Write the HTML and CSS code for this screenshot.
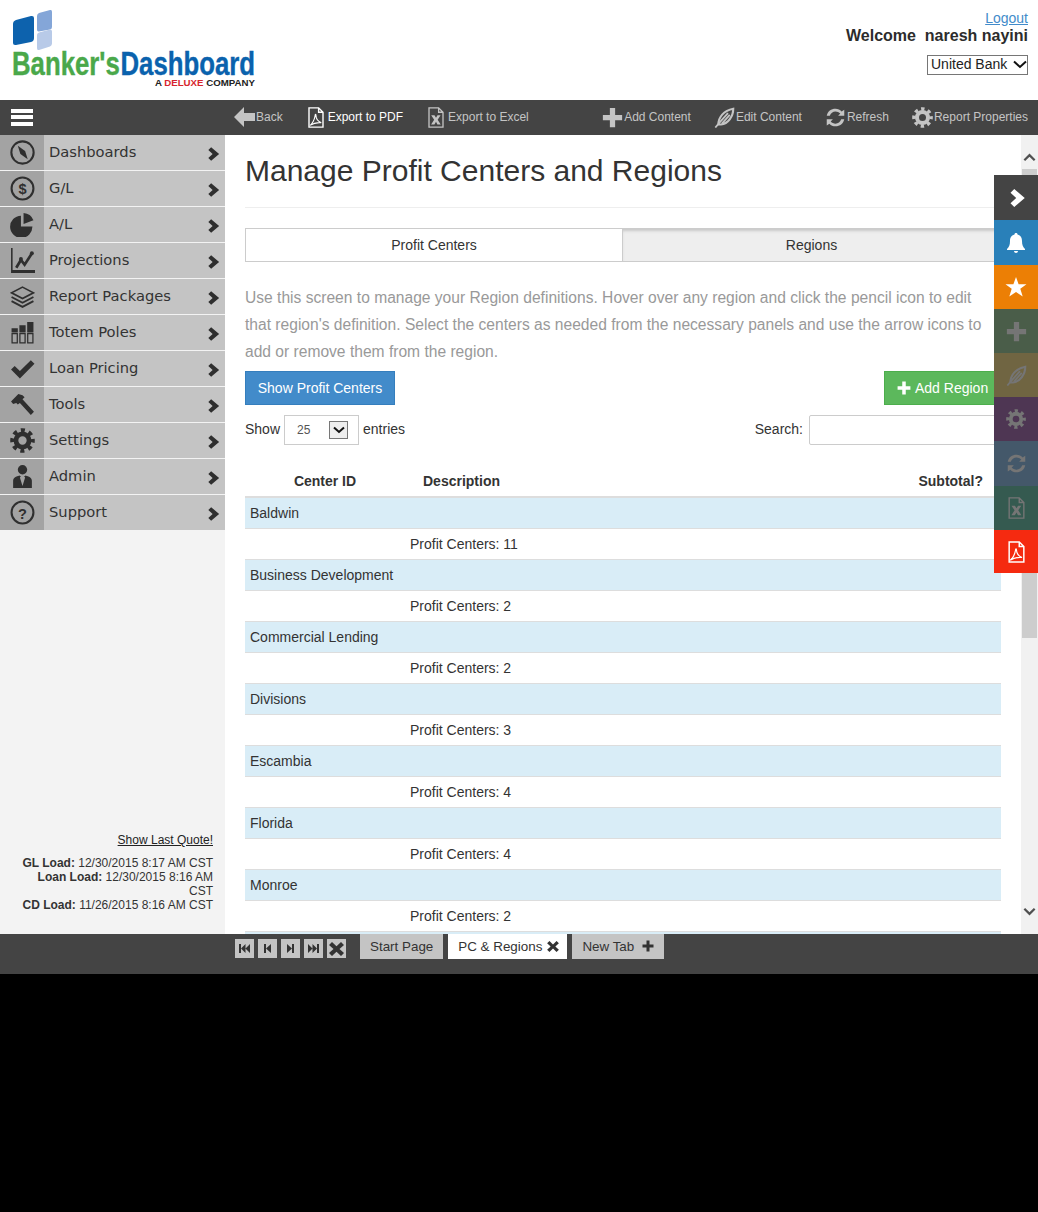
FILE: index.html
```html
<!DOCTYPE html>
<html lang="en">
<head>
    <meta charset="UTF-8">
    <title>Manage Profit Centers and Regions</title>
    <link rel="stylesheet" href="styles.css">
</head>
<body>
    <svg class="defs" width="0" height="0">
        <symbol id="i-chev" viewBox="0 0 12 14"><path d="M1 3.500 3.500 1l7 6-7 6L1 10.500 4.800 7z"/></symbol>
        <symbol id="i-plus" viewBox="0 0 24 24"><path d="M9 1h6v8h8v6h-8v8H9v-8H1V9h8z"/></symbol>
        <symbol id="i-edit" viewBox="0 0 24 24"><path d="M5 20C5 12 11 4 22 2c0 9-6 17-14 18z" fill="none" stroke="currentColor" stroke-width="2.400"/><path d="M1.500 23.500 7 17l9-10M9 19 18 9" fill="none" stroke="currentColor" stroke-width="2"/></symbol>
        <symbol id="i-refresh" viewBox="0 0 24 24"><path d="M2 10C3 5 7 2 12 2c3 0 5 1 7 3l3-2v7h-7l2.500-2.500C16 6 14 5 12 5 9 5 6.500 7 5.500 10zM22 14c-1 5-5 8-10 8-3 0-5-1-7-3l-3 2v-7h7l-2.500 2.500C8 18 10 19 12 19c3 0 5.500-2 6.500-5z"/></symbol>
        <symbol id="i-gear" viewBox="0 0 24 24"><circle cx="12" cy="12" r="6.300" fill="none" stroke="currentColor" stroke-width="4.600"/><circle cx="12" cy="12" r="9.800" fill="none" stroke="currentColor" stroke-width="4" stroke-dasharray="3.850 3.850" stroke-dashoffset="1.900"/></symbol>
        <symbol id="i-excel" viewBox="0 0 20 24"><path d="M2 1h11l5 5v17H2zM13 1v5h5" fill="none" stroke="currentColor" stroke-width="1.500"/><path d="M4.500 9.500h3.800l1.700 2.900 1.700-2.900h3.500l-3.300 5 3.500 5.500h-3.800L10 16.800 8.200 20H4.400l3.500-5.500z"/></symbol>
        <symbol id="i-pdf" viewBox="0 0 20 24"><path d="M2 1h11l5 5v17H2zM13 1v5h5" fill="none" stroke="currentColor" stroke-width="1.600"/><path d="M3 21c3-2 5-6 6-11 0-2 1-2 1 0 0 3 2 6 6 8-4-.500-8 0-13 3z" fill="none" stroke="currentColor" stroke-width="1.300"/></symbol>
    </svg>

    <div class="app">
        <header class="top">
            <div class="logo">
                <svg class="logo-mark" width="42" height="40" viewBox="0 0 42 40">
                    <path d="M1 14q0-3 3-4l15-4q3-.500 3 2v20q0 3-3 4L4 35q-3 .500-3-2z" fill="#0d62ad"/>
                    <path d="M25 6q0-2 2-3l11-3q2-.500 2 2v15q0 2-2 2.500l-11 2q-2 .500-2-2z" fill="#84a6d8"/>
                    <path d="M25 25q0-2 2-2.500l11-3q2 0 2 2v12q0 2-2 3l-11 3.500q-2 .500-2-2z" fill="#b8cae8"/>
                </svg>
                <div class="logo-name"><span class="logo-green">Banker's</span><span class="logo-blue">Dashboard</span></div>
                <div class="logo-sub">A <b>DELUXE</b> COMPANY</div>
            </div>
            <div class="user">
                <a class="logout" href="#">Logout</a>
                <div class="welcome">Welcome &nbsp;naresh nayini</div>
                <div class="bank-wrap">
                    <select class="bank"><option>United Bank</option></select>
                    <svg class="bank-arrow" width="14" height="9" viewBox="0 0 14 9"><path d="M1 1.500 7 7l6-5.500" fill="none" stroke="#111" stroke-width="2"/></svg>
                </div>
            </div>
        </header>

        <nav class="toolbar">
            <div class="burger"><span></span><span></span><span></span></div>
            <a class="tool"><svg width="21" height="20" viewBox="0 0 21 20" fill="currentColor"><path d="M0 10 10 0v6h11v8H10v6z"/></svg>Back</a>
            <a class="tool tool-doc tool-on"><svg width="18" height="21" fill="currentColor"><use href="#i-pdf"/></svg>Export to PDF</a>
            <a class="tool tool-doc"><svg width="18" height="21" fill="currentColor"><use href="#i-excel"/></svg>Export to Excel</a>
            <div class="tools-right">
                <a class="tool"><svg width="21" height="21" fill="currentColor"><use href="#i-plus"/></svg>Add Content</a>
                <a class="tool"><svg width="21" height="21" fill="currentColor"><use href="#i-edit"/></svg>Edit Content</a>
                <a class="tool"><svg width="21" height="21" fill="currentColor"><use href="#i-refresh"/></svg>Refresh</a>
                <a class="tool"><svg width="21" height="21" fill="currentColor"><use href="#i-gear"/></svg>Report Properties</a>
            </div>
        </nav>

        <div class="middle">
            <aside class="sidebar">
                <ul class="menu">
                    <li><span class="menu-icon"><svg viewBox="0 0 24 24"><circle cx="12" cy="12" r="10.700" fill="none" stroke="currentColor" stroke-width="2"/><path d="M7.500 5.500 14.500 10.500 17 18.500 10 13.500z"/></svg></span><span class="menu-text">Dashboards</span><svg class="chev"><use href="#i-chev"/></svg></li>
                    <li><span class="menu-icon"><svg viewBox="0 0 24 24"><circle cx="12" cy="12" r="10.500" fill="none" stroke="currentColor" stroke-width="2"/><text x="12" y="17" text-anchor="middle" class="icon-glyph">$</text></svg></span><span class="menu-text">G/L</span><svg class="chev"><use href="#i-chev"/></svg></li>
                    <li><span class="menu-icon"><svg viewBox="0 0 24 24"><path d="M10.500 3.500V14h11A10.700 10.700 0 1 1 10.500 3.500z"/><path d="M13 1v10.500L22.500 8A11 11 0 0 0 13 1z"/></svg></span><span class="menu-text">A/L</span><svg class="chev"><use href="#i-chev"/></svg></li>
                    <li><span class="menu-icon"><svg viewBox="0 0 24 24"><path d="M1 0h1.500v21H24v3H1z" /><path d="M6 19l4.500-7.500 3.500 4.500 6.500-10" fill="none" stroke="currentColor" stroke-width="2.600"/><circle cx="10.500" cy="10.500" r="1.900"/><circle cx="21" cy="5" r="1.900"/></svg></span><span class="menu-text">Projections</span><svg class="chev"><use href="#i-chev"/></svg></li>
                    <li><span class="menu-icon"><svg viewBox="0 0 24 24"><path d="M12 3l10.500 5.500L12 14 1.500 8.500z" fill="none" stroke="currentColor" stroke-width="1.600"/><path d="M1.500 12.500 12 18l10.500-5.500M1.500 16.500 12 22l10.500-5.500" fill="none" stroke="currentColor" stroke-width="1.800"/></svg></span><span class="menu-text">Report Packages</span><svg class="chev"><use href="#i-chev"/></svg></li>
                    <li><span class="menu-icon"><svg viewBox="0 0 24 24"><path d="M1.500 8h6v4h-6zM9 5h6v7H9zM16.500 2h6v10h-6z"/><path d="M2 13h5v9H2zM9.500 13h5v9h-5zM17 13h5v9h-5z" fill="none" stroke="currentColor" stroke-width="1.200"/></svg></span><span class="menu-text">Totem Poles</span><svg class="chev"><use href="#i-chev"/></svg></li>
                    <li><span class="menu-icon"><svg viewBox="0 0 24 24"><path d="M1 13l3.500-3.500 5 5L20 4l3.500 3.500L9.500 21.500z"/></svg></span><span class="menu-text">Loan Pricing</span><svg class="chev"><use href="#i-chev"/></svg></li>
                    <li><span class="menu-icon"><svg viewBox="0 0 24 24"><path d="M1 9 8 2l4 1 2 2-2 2 11 12-3 3L9.500 10.500 7.500 12 6 10.500l-3 1z"/></svg></span><span class="menu-text">Tools</span><svg class="chev"><use href="#i-chev"/></svg></li>
                    <li><span class="menu-icon"><svg viewBox="0 0 24 24"><use href="#i-gear"/></svg></span><span class="menu-text">Settings</span><svg class="chev"><use href="#i-chev"/></svg></li>
                    <li><span class="menu-icon"><svg viewBox="0 0 24 24"><circle cx="12" cy="5.500" r="4.500"/><path d="M3 23v-7c0-3 3-4 6-5l1.500 1-1 1L12 21l2.500-8-1-1L15 11c3 1 6 2 6 5v7z"/></svg></span><span class="menu-text">Admin</span><svg class="chev"><use href="#i-chev"/></svg></li>
                    <li><span class="menu-icon"><svg viewBox="0 0 24 24"><circle cx="12" cy="12" r="10.500" fill="none" stroke="currentColor" stroke-width="2"/><text x="12" y="18" text-anchor="middle" class="icon-glyph">?</text></svg></span><span class="menu-text">Support</span><svg class="chev"><use href="#i-chev"/></svg></li>
                </ul>
                <div class="loads">
                    <a class="quote" href="#">Show Last Quote!</a>
                    <p><b>GL Load:</b> 12/30/2015 8:17 AM CST<br><b>Loan Load:</b> 12/30/2015 8:16 AM CST<br><b>CD Load:</b> 11/26/2015 8:16 AM CST</p>
                </div>
            </aside>

            <main class="content">
                <h1>Manage Profit Centers and Regions</h1>
                <div class="tabs">
                    <div class="tab tab-on">Profit Centers</div>
                    <div class="tab">Regions</div>
                </div>
                <p class="intro">Use this screen to manage your Region definitions. Hover over any region and click the pencil icon to edit that region's definition. Select the centers as needed from the necessary panels and use the arrow icons to add or remove them from the region.</p>
                <div class="actions">
                    <button class="btn btn-blue">Show Profit Centers</button>
                    <button class="btn btn-green"><svg width="14" height="14" fill="currentColor"><use href="#i-plus"/></svg>Add Region</button>
                </div>
                <div class="filters">
                    <div class="length">Show
                        <div class="length-box"><span class="length-num">25</span><span class="length-arrow"><svg width="12" height="8" viewBox="0 0 12 8"><path d="M1 1.500 6 6l5-4.500" fill="none" stroke="#111" stroke-width="2"/></svg></span></div>
                        entries</div>
                    <label class="search">Search: <input type="text"></label>
                </div>
                <table class="grid">
                    <colgroup><col class="col-id"><col></colgroup>
                    <thead>
                        <tr><th class="th-id">Center ID</th><th class="th-desc">Description <span class="th-sub">Subtotal?</span></th></tr>
                    </thead>
                    <tbody>
                        <tr class="group"><td colspan="2">Baldwin</td></tr>
                        <tr><td></td><td>Profit Centers: 11</td></tr>
                        <tr class="group"><td colspan="2">Business Development</td></tr>
                        <tr><td></td><td>Profit Centers: 2</td></tr>
                        <tr class="group"><td colspan="2">Commercial Lending</td></tr>
                        <tr><td></td><td>Profit Centers: 2</td></tr>
                        <tr class="group"><td colspan="2">Divisions</td></tr>
                        <tr><td></td><td>Profit Centers: 3</td></tr>
                        <tr class="group"><td colspan="2">Escambia</td></tr>
                        <tr><td></td><td>Profit Centers: 4</td></tr>
                        <tr class="group"><td colspan="2">Florida</td></tr>
                        <tr><td></td><td>Profit Centers: 4</td></tr>
                        <tr class="group"><td colspan="2">Monroe</td></tr>
                        <tr><td></td><td>Profit Centers: 2</td></tr>
                        <tr class="group"><td colspan="2">&nbsp;</td></tr>
                    </tbody>
                </table>
            </main>

            <div class="scrollbar">
                <svg class="scroll-btn" viewBox="0 0 16 16"><path d="M2.500 11 8 5.500 13.500 11" fill="none" stroke="#505050" stroke-width="2.400"/></svg>
                <div class="scroll-track"><div class="scroll-thumb"></div></div>
                <svg class="scroll-btn" viewBox="0 0 16 16"><path d="M2.500 5 8 10.500 13.500 5" fill="none" stroke="#505050" stroke-width="2.400"/></svg>
            </div>

            <div class="quick">
                <div class="quick-item q-dark"><svg class="q-chev" width="18" height="22" fill="currentColor"><use href="#i-chev"/></svg></div>
                <div class="quick-item q-blue"><svg width="20" height="22" viewBox="0 0 20 22" fill="currentColor"><path d="M10 1c1 0 1.500 .500 1.500 1.500C15 3.500 16 6 16 9c0 4 1 6 3 8v1H1v-1c2-2 3-4 3-8 0-3 1-5.500 4.500-6.500C8.500 1.500 9 1 10 1zM8 19h4c0 1-1 2-2 2s-2-1-2-2z"/></svg></div>
                <div class="quick-item q-orange"><svg width="22" height="20" viewBox="0 0 22 20" fill="currentColor"><path d="M11 0l2.600 7.200H21.500l-6.200 4.600 2.400 7.700L11 15l-6.700 4.500 2.400-7.700L.5 7.200h7.900z"/></svg></div>
                <div class="quick-item q-green q-dim"><svg width="21" height="21" fill="currentColor"><use href="#i-plus"/></svg></div>
                <div class="quick-item q-brown q-dim"><svg width="21" height="21" fill="currentColor"><use href="#i-edit"/></svg></div>
                <div class="quick-item q-purple q-dim"><svg width="20" height="20" fill="currentColor"><use href="#i-gear"/></svg></div>
                <div class="quick-item q-slate q-dim"><svg width="21" height="21" fill="currentColor"><use href="#i-refresh"/></svg></div>
                <div class="quick-item q-teal q-dim"><svg width="19" height="22" fill="currentColor"><use href="#i-excel"/></svg></div>
                <div class="quick-item q-red"><svg width="19" height="22" fill="currentColor"><use href="#i-pdf"/></svg></div>
            </div>
        </div>

        <footer class="bottom">
            <div class="pager">
                <a><svg width="11" height="9" viewBox="0 0 11 9"><path d="M0 0h2v9H0zM2 4.500 6.500 0v9zM6.500 4.500 11 0v9z"/></svg></a>
                <a><svg width="7" height="9" viewBox="0 0 7 9"><path d="M0 0h2v9H0zM2 4.500 7 0v9z"/></svg></a>
                <a><svg width="7" height="9" viewBox="0 0 7 9"><path d="M7 0H5v9h2zM5 4.500 0 0v9z"/></svg></a>
                <a><svg width="11" height="9" viewBox="0 0 11 9"><path d="M11 0H9v9h2zM9 4.500 4.500 0v9zM4.500 4.500 0 0v9z"/></svg></a>
                <a><svg width="15" height="14" viewBox="0 0 15 14"><path d="M3 0l4.500 4.300L12 0l3 3-4.500 4 4.500 4-3 3-4.500-4.300L3 14l-3-3 4.500-4L0 3z"/></svg></a>
            </div>
            <div class="page-tab">Start Page</div>
            <div class="page-tab page-tab-on">PC &amp; Regions<svg width="12" height="11" viewBox="0 0 15 14"><path d="M3 0l4.500 4.300L12 0l3 3-4.500 4 4.500 4-3 3-4.500-4.300L3 14l-3-3 4.500-4L0 3z"/></svg></div>
            <div class="page-tab">New Tab<svg class="tab-plus" width="12" height="12"><use href="#i-plus"/></svg></div>
        </footer>
    </div>
</body>
</html>
```

FILE: styles.css
```css
* {
    box-sizing: border-box;
    margin: 0;
    padding: 0;
}

html, body {
    background: #000;
}

body {
    font-family: "Liberation Sans", Arial, sans-serif;
    font-size: 14px;
    color: #333;
}

.defs {
    position: absolute;
}

.app {
    height: 974px;
    display: flex;
    flex-direction: column;
    overflow: hidden;
}

/* header */
.top {
    height: 100px;
    background: #fff;
    display: flex;
    justify-content: space-between;
    padding: 10px 10px 0 12px;
}

.logo {
    width: 243px;
}

.logo-mark {
    display: block;
    height: 40px;
}

.logo-name {
    font-weight: 700;
    font-size: 33px;
    line-height: 28px;
    white-space: nowrap;
    width: 243px;
    transform: scaleX(0.78);
    transform-origin: left center;
    -webkit-text-stroke: 0.4px currentColor;
}

.logo-green {
    color: #4aa84a;
}

.logo-blue {
    color: #0a62ad;
    margin-left: 1px;
}

.logo-sub {
    font-size: 9.7px;
    font-weight: 700;
    line-height: 10px;
    color: #222;
    text-align: right;
    white-space: nowrap;
}

.logo-sub b {
    color: #d7262e;
}

.user {
    text-align: right;
    display: flex;
    flex-direction: column;
    align-items: flex-end;
}

.logout {
    color: #428bca;
    text-decoration: underline;
    font-size: 14px;
    line-height: 16px;
}

.welcome {
    font-size: 16px;
    font-weight: 700;
    line-height: 18px;
    margin-top: 1px;
    color: #2c2c2c;
}

.bank-wrap {
    position: relative;
    margin-top: 10px;
    height: 20px;
}

.bank {
    display: block;
    width: 101px;
    height: 20px;
    padding: 0 0 2px 3px;
    font-family: "Liberation Sans", Arial, sans-serif;
    font-size: 14px;
    background: #fff;
    border: 1px solid #767676;
    border-radius: 0;
    color: #222;
    appearance: none;
}

.bank-arrow {
    position: absolute;
    right: 1px;
    top: 5px;
}

/* toolbar */
.toolbar {
    height: 35px;
    background: #444;
    display: flex;
    align-items: center;
    padding: 0 10px 1px 0;
}

.burger {
    width: 234px;
    padding-left: 11px;
    flex: none;
}

.burger span {
    display: block;
    width: 22px;
    height: 4px;
    background: #fff;
    margin-bottom: 2.500px;
}

.burger span:last-child {
    margin-bottom: 0;
}

.tool {
    display: flex;
    align-items: center;
    gap: 1px;
    font-size: 12px;
    color: #c4c4c4;
    margin-right: 24px;
    white-space: nowrap;
}

.tool-doc {
    gap: 3px;
}

.tool-on {
    color: #fff;
}

.tools-right {
    display: flex;
    margin-left: auto;
}

.tools-right .tool {
    margin-right: 0;
    margin-left: 23px;
}

/* middle */
.middle {
    position: relative;
    flex: 1;
    display: flex;
    min-height: 0;
    background: #fff;
}

.sidebar {
    width: 225px;
    flex: none;
    background: #f3f3f3;
    display: flex;
    flex-direction: column;
}

.menu {
    list-style: none;
}

.menu li {
    height: 36px;
    display: flex;
    align-items: center;
    background: #c4c4c4;
    border-bottom: 1px solid #f3f3f3;
    color: #333;
    font-family: "DejaVu Sans", Verdana, sans-serif;
    font-size: 14.7px;
}

.menu li:last-child {
    border-bottom: 0;
    height: 35px;
}

.menu-icon {
    width: 44px;
    height: 100%;
    flex: none;
    background: #a3a3a3;
    display: flex;
    align-items: center;
    justify-content: center;
}

.menu-icon svg {
    width: 25px;
    height: 25px;
    fill: #2f2f2f;
    color: #2f2f2f;
}

.icon-glyph {
    font-family: "Liberation Sans", sans-serif;
    font-size: 14px;
    font-weight: 700;
}

.menu-text {
    flex: 1;
    padding: 0 0 2px 5px;
}

.chev {
    width: 14px;
    height: 16px;
    margin: 3px 4px 0 0;
    fill: #2f2f2f;
}

.loads {
    margin-top: auto;
    padding: 0 12px 22px 12px;
    text-align: right;
    font-size: 12px;
    line-height: 14px;
    color: #333;
}

.quote {
    color: #222;
    text-decoration: underline;
    display: block;
    margin-bottom: 9px;
}

/* content */
.content {
    width: 796px;
    flex: none;
    padding: 0 20px;
    overflow: hidden;
}

h1 {
    font-size: 30px;
    font-weight: 400;
    line-height: 33px;
    color: #333;
    padding-top: 19px;
    border-bottom: 1px solid #eee;
    height: 73px;
}

.tabs {
    display: flex;
    margin-top: 20px;
    height: 34px;
}

.tab {
    flex: 1;
    text-align: center;
    line-height: 32px;
    background: #eee;
    border: 1px solid #ccc;
    border-left: 0;
    box-shadow: inset 0 3px 3px -1px #c8c8c8;
}

.tab-on {
    flex: none;
    width: 378px;
    background: #fff;
    border-left: 1px solid #ccc;
    box-shadow: none;
}

.intro {
    margin-top: 22px;
    font-size: 15.6px;
    line-height: 27px;
    color: #999;
}

.actions {
    display: flex;
    justify-content: space-between;
    margin-top: 6px;
}

.btn {
    height: 34px;
    border: 1px solid transparent;
    font-family: inherit;
    font-size: 14px;
    color: #fff;
    display: flex;
    align-items: center;
}

.btn-blue {
    width: 150px;
    justify-content: center;
    background: #428bca;
    border-color: #357ebd;
}

.btn-green {
    width: 117px;
    padding-left: 12px;
    gap: 4px;
    background: #5cb85c;
    border-color: #4cae4c;
}

.filters {
    display: flex;
    justify-content: space-between;
    margin-top: 10px;
    height: 30px;
    line-height: 28px;
}

.length {
    display: flex;
    align-items: flex-start;
    gap: 4px;
}

.length-box {
    width: 75px;
    height: 30px;
    border: 1px solid #ccc;
    font-size: 12px;
    display: flex;
    align-items: center;
    justify-content: space-between;
    padding: 0 10px 0 12px;
    color: #555;
}

.length-arrow {
    width: 19px;
    height: 18px;
    background: #eee;
    border: 1px solid #777;
    display: flex;
    align-items: center;
    justify-content: center;
}

.search {
    display: flex;
    align-items: flex-start;
    gap: 6px;
}

.search input {
    width: 192px;
    height: 30px;
    border: 1px solid #ccc;
    border-radius: 2px 0 0 2px;
    background: #fff;
}

/* table */
.grid {
    width: 100%;
    margin-top: 21px;
    border-collapse: collapse;
    table-layout: fixed;
}

.col-id {
    width: 160px;
}

.grid th {
    height: 31px;
    border-bottom: 2px solid #ddd;
    font-weight: 700;
    color: #333;
    padding: 0 18px;
}

.th-id {
    text-align: center;
}

.th-desc {
    text-align: left;
}

.th-sub {
    float: right;
}

.grid td {
    height: 31px;
    padding: 0 5px;
    border-bottom: 1px solid #ddd;
}

.group td {
    background: #d9edf7;
}

/* scrollbar */
.scrollbar {
    flex: 1;
    background: #f1f1f1;
    display: flex;
    flex-direction: column;
    padding: 0 1px;
}

.scroll-btn {
    height: 17px;
    width: 15px;
    flex: none;
    margin: 14px 0 3px;
}

.scrollbar .scroll-btn:last-child {
    margin: 3px 0 14px;
}

.scroll-track {
    flex: 1;
}

.scroll-thumb {
    height: 469px;
    background: #cdcdcd;
}

/* floating panel */
.quick {
    position: absolute;
    top: 40px;
    right: 0;
    width: 44px;
}

.quick-item {
    height: 44px;
    display: flex;
    align-items: center;
    justify-content: center;
    color: #fff;
}

.q-chev {
    margin-left: 3px;
}

.q-dark {
    height: 45px;
    background: #444;
}

.q-blue {
    height: 45px;
    background: #2980b9;
}

.q-green {
    background: #4a5d49;
}

.q-orange {
    background: #ec7f05;
}

.q-brown {
    background: #706542;
}

.q-purple {
    background: #4e3653;
}

.q-slate {
    height: 45px;
    background: #44586a;
}

.q-teal {
    background: #355a50;
}

.q-red {
    height: 43px;
    background: #f52a10;
}

.q-dim {
    color: #757575;
}

/* bottom bar */
.bottom {
    height: 40px;
    background: #444;
    display: flex;
    align-items: flex-start;
    padding-left: 235px;
}

.pager {
    display: flex;
    gap: 4px;
    margin: 5px 14px 0 0;
}

.pager a {
    width: 19px;
    height: 19px;
    background: #c4c4c4;
    display: flex;
    align-items: center;
    justify-content: center;
}

.pager svg {
    fill: #333;
}

.page-tab {
    height: 25px;
    padding: 0 10px 1px;
    margin-right: 5px;
    background: #c4c4c4;
    color: #333;
    font-size: 13.4px;
    display: flex;
    align-items: center;
    gap: 5px;
    white-space: nowrap;
}

.page-tab-on {
    background: #fff;
    padding-right: 8px;
}

.page-tab svg {
    fill: #333;
}

.tab-plus {
    margin-left: 3px;
}
```
